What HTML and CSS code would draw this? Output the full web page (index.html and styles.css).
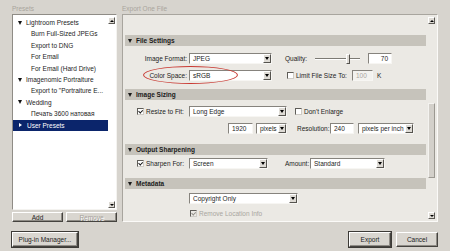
FILE: index.html
```html
<!DOCTYPE html>
<html lang="en">

<head>
  <meta charset="UTF-8">
  <title>Export One File</title>
  <link rel="stylesheet" href="styles.css">
</head>

<body>
  <div class="window">
    <div class="main">
      <div class="presets">
        <div class="caption">Presets</div>
        <div class="list">
          <ul class="tree">
            <li class="node open">Lightroom Presets</li>
            <li class="leaf">Burn Full-Sized JPEGs</li>
            <li class="leaf">Export to DNG</li>
            <li class="leaf">For Email</li>
            <li class="leaf">For Email (Hard Drive)</li>
            <li class="node open">Imagenomic Portraiture</li>
            <li class="leaf">Export to "Portraiture E...</li>
            <li class="node open">Wedding</li>
            <li class="leaf">Печать 3600 натовая</li>
            <li class="node closed selected">User Presets</li>
          </ul>
          <div class="vscroll small">
            <span class="sarrow up"></span>
            <span class="sarrow down"></span>
          </div>
        </div>
        <div class="list-buttons">
          <div class="btn">Add</div>
          <div class="btn disabled">Remove</div>
        </div>
      </div>

      <div class="export">
        <div class="caption">Export One File</div>
        <div class="panel">
          <div class="sections">
            <div class="spacer-top"></div>

            <div class="section-head">File Settings</div>
            <div class="section-body fs">
              <div class="row">
                <span class="lbl">Image Format:</span>
                <div class="select w83">JPEG<span class="arrow"></span></div>
                <span class="quality">Quality:</span>
                <div class="slider"><span class="thumb"></span></div>
                <div class="input w24 right">70</div>
              </div>
              <div class="row">
                <span class="ring"></span>
                <span class="lbl">Color Space:</span>
                <div class="select w83">sRGB<span class="arrow"></span></div>
                <span class="check-label limit"><span class="box"></span>Limit File Size To:</span>
                <div class="input w21 muted">100</div>
                <span class="unit">K</span>
              </div>
            </div>

            <div class="section-head">Image Sizing</div>
            <div class="section-body is">
              <div class="row">
                <span class="lbl chk"><span class="box on"></span>Resize to Fit:</span>
                <div class="select w98">Long Edge<span class="arrow"></span></div>
                <span class="check-label enlarge"><span class="box"></span>Don't Enlarge</span>
              </div>
              <div class="row">
                <div class="input w25 px">1920</div>
                <div class="select w31 units">pixels<span class="arrow"></span></div>
                <span class="resolution">Resolution:</span>
                <div class="input w24">240</div>
                <div class="select w56 ppi">pixels per inch<span class="arrow"></span></div>
              </div>
            </div>

            <div class="section-head">Output Sharpening</div>
            <div class="section-body os">
              <div class="row">
                <span class="lbl chk"><span class="box on"></span>Sharpen For:</span>
                <div class="select w79">Screen<span class="arrow"></span></div>
                <span class="amount">Amount:</span>
                <div class="select w75">Standard<span class="arrow"></span></div>
              </div>
            </div>

            <div class="section-head">Metadata</div>
            <div class="section-body md">
              <div class="row">
                <div class="select w109 nolabel">Copyright Only<span class="arrow"></span></div>
              </div>
              <div class="row">
                <span class="check-label disabled location"><span class="box on"></span>Remove Location Info</span>
              </div>
            </div>
          </div>
          <div class="vscroll">
            <span class="sarrow up"></span>
            <span class="sthumb"></span>
            <span class="sarrow down"></span>
          </div>
        </div>
      </div>
    </div>

    <div class="footer">
      <div class="btn default plugin">Plug-in Manager...</div>
      <div class="actions">
        <div class="btn default">Export</div>
        <div class="btn">Cancel</div>
      </div>
    </div>
  </div>
</body>

</html>
```

FILE: styles.css
```css
* {
  box-sizing: border-box;
}

body {
  margin: 0;
  background: #d7d4ce;
  font-family: "Liberation Sans", Arial, sans-serif;
  font-size: 6.5px;
  color: #1c1c1c;
}

.window {
  width: 450px;
  height: 251px;
  padding: 4px 12px 0 12px;
  display: flex;
  flex-direction: column;
}

.main {
  display: flex;
  gap: 5px;
  height: 218px;
}

.caption {
  height: 10px;
  line-height: 10px;
  color: #a9a59d;
}

/* presets column */

.presets {
  width: 105px;
  display: flex;
  flex-direction: column;
}

.list {
  height: 196px;
  background: #fff;
  border: 1px solid;
  border-color: #8f8c86 #f4f3f0 #f4f3f0 #8f8c86;
  display: flex;
}

.tree {
  list-style: none;
  margin: 0;
  padding: 2px 0 0;
  flex: 1;
}

.tree li {
  height: 11.4px;
  line-height: 11.4px;
  white-space: nowrap;
  overflow: hidden;
}

.tree .leaf {
  padding-left: 18px;
}

.tree .node {
  padding-left: 5px;
  display: flex;
  align-items: center;
}

.tree .node::before {
  content: "";
  margin-right: 4px;
}

.tree .open::before {
  border-left: 2.5px solid transparent;
  border-right: 2.5px solid transparent;
  border-top: 4px solid #111;
}

.tree .closed::before {
  margin-left: 1px;
  margin-right: 5px;
  border-top: 2.5px solid transparent;
  border-bottom: 2.5px solid transparent;
  border-left: 3px solid #fff;
}

.tree .selected {
  background: #0b256b;
  color: #fff;
}

.vscroll {
  width: 8px;
  display: flex;
  flex-direction: column;
  padding: 2px 0 1px;
}

.sarrow {
  width: 7px;
  height: 7px;
  background: #dedbd5;
  border: 1px solid;
  border-color: #fff #5b5954 #5b5954 #fff;
  display: flex;
  align-items: center;
  justify-content: center;
}

.sarrow::after {
  content: "";
  border-left: 2px solid transparent;
  border-right: 2px solid transparent;
}

.sarrow.up::after {
  border-bottom: 2px solid #000;
}

.sarrow.down {
  margin-top: auto;
}

.sarrow.down::after {
  border-top: 2px solid #000;
}

.list-buttons {
  display: flex;
  gap: 3px;
  margin-top: 2px;
  height: 10px;
}

.list-buttons .btn {
  flex: 1;
}

/* buttons */

.btn {
  background: #d9d6d0;
  border: 1px solid;
  border-color: #fff #45433f #45433f #fff;
  box-shadow: inset -1px -1px #8f8c86;
  display: flex;
  align-items: center;
  justify-content: center;
  white-space: nowrap;
}

.btn.disabled {
  color: #a5a29b;
  text-shadow: 1px 1px #fff;
}

.btn.default {
  outline: 1px solid #3c3a36;
}

/* export panel */

.export {
  flex: 1;
  display: flex;
  flex-direction: column;
}

.panel {
  height: 208px;
  background: #ebe9e4;
  border: 1px solid;
  border-color: #a8a59e #fbfaf8 #fbfaf8 #a8a59e;
  display: flex;
  overflow: hidden;
}

.sections {
  flex: 1;
  padding-left: 2px;
  margin-right: 1px;
}

.spacer-top {
  height: 20px;
}

.section-head {
  height: 11px;
  background: #c6c3bb;
  font-weight: bold;
  display: flex;
  align-items: center;
  padding-left: 3px;
  color: #1a1a1a;
}

.section-head::before {
  content: "";
  margin-right: 4px;
  border-left: 2.5px solid transparent;
  border-right: 2.5px solid transparent;
  border-top: 4px solid #1a1a1a;
}

.section-body {
  display: flex;
  flex-direction: column;
  gap: 6px;
}

.section-body.fs {
  height: 43px;
  padding-top: 7px;
}

.section-body.is {
  height: 44px;
  padding-top: 6px;
}

.section-body.os {
  height: 23px;
  padding-top: 3px;
}

.section-body.md {
  padding-top: 4px;
  gap: 4px;
}

.row {
  position: relative;
  display: flex;
  align-items: center;
  height: 11px;
  white-space: nowrap;
}

.lbl {
  width: 62px;
  margin-right: 2px;
  text-align: right;
}

.lbl.chk {
  display: flex;
  align-items: center;
  gap: 2px;
  padding-left: 12px;
  text-align: left;
}

.select {
  height: 11px;
  background: #fff;
  border: 1px solid;
  border-color: #86837d #f7f6f3 #f7f6f3 #86837d;
  display: flex;
  align-items: center;
  padding-left: 3px;
  overflow: hidden;
}

.select .arrow {
  margin-left: auto;
  width: 8px;
  height: 9px;
  background: #dedbd5;
  border: 1px solid;
  border-color: #fff #55534e #55534e #fff;
  display: flex;
  align-items: center;
  justify-content: center;
  flex-shrink: 0;
}

.select .arrow::after {
  content: "";
  border-left: 2px solid transparent;
  border-right: 2px solid transparent;
  border-top: 3px solid #000;
}

.input {
  height: 11px;
  background: #fff;
  border: 1px solid;
  border-color: #86837d #f7f6f3 #f7f6f3 #86837d;
  display: flex;
  align-items: center;
  padding: 0 3px;
}

.input.right {
  justify-content: flex-end;
}

.input.muted {
  background: #f3f2ef;
  color: #a9a69f;
}

.box {
  width: 7px;
  height: 7px;
  background: #fff;
  border: 1px solid;
  border-color: #5f5d58 #cfccc6 #cfccc6 #5f5d58;
  flex-shrink: 0;
  display: flex;
  align-items: center;
  justify-content: center;
}

.box.on::after {
  content: "";
  width: 3px;
  height: 2px;
  border-left: 1px solid #111;
  border-bottom: 1px solid #111;
  transform: rotate(-45deg) translate(0, -0.5px);
}

.check-label {
  display: flex;
  align-items: center;
  gap: 2px;
}

.check-label.disabled {
  color: #a9a69f;
}

.check-label.disabled .box {
  background: #ebe9e4;
}

.check-label.disabled .box.on::after {
  border-color: #8f8c86;
}

.w83 { width: 83px; }
.w98 { width: 98px; }
.w79 { width: 79px; }
.w75 { width: 75px; }
.w31 { width: 31px; }
.w56 { width: 56px; }
.w109 { width: 109px; }
.w24 { width: 24px; }
.w25 { width: 25px; }
.w21 { width: 21px; }

.quality {
  margin-left: 13px;
  width: 30px;
}

.slider {
  position: relative;
  width: 45px;
  height: 2px;
  border-top: 1px solid #7c7a74;
  border-bottom: 1px solid #fff;
  margin-right: 8px;
}

.slider .thumb {
  position: absolute;
  left: 31px;
  top: -5px;
  width: 4px;
  height: 10px;
  background: #dedbd5;
  border: 1px solid;
  border-color: #fff #55534e #55534e #fff;
}

.ring {
  position: absolute;
  left: 18px;
  top: -4px;
  width: 95px;
  height: 18px;
  border: 1.5px solid #c93a33;
  border-radius: 50%;
}

.limit {
  margin-left: 15px;
  width: 65px;
}

.unit {
  margin-left: 4px;
}

.enlarge {
  margin-left: 8px;
}

.px {
  margin-left: 103px;
  margin-right: 3px;
}

.resolution {
  margin-left: 10px;
  width: 33px;
}

.ppi {
  margin-left: 4px;
}

.amount {
  margin-left: 17px;
  width: 25px;
}

.nolabel {
  margin-left: 64px;
}

.location {
  margin-left: 65px;
}

.panel .vscroll {
  width: 10px;
  padding: 2px 1px 2px 1px;
}

.sthumb {
  margin-top: 79px;
  height: 75px;
  width: 7px;
  background: #d3d0ca;
  border: 1px solid;
  border-color: #f4f3f0 #9b9891 #9b9891 #f4f3f0;
}

/* footer */

.footer {
  display: flex;
  justify-content: space-between;
  margin-top: 10px;
  height: 15px;
}

.plugin {
  width: 66px;
}

.actions {
  display: flex;
  gap: 5px;
}

.actions .btn {
  width: 42px;
}
```
